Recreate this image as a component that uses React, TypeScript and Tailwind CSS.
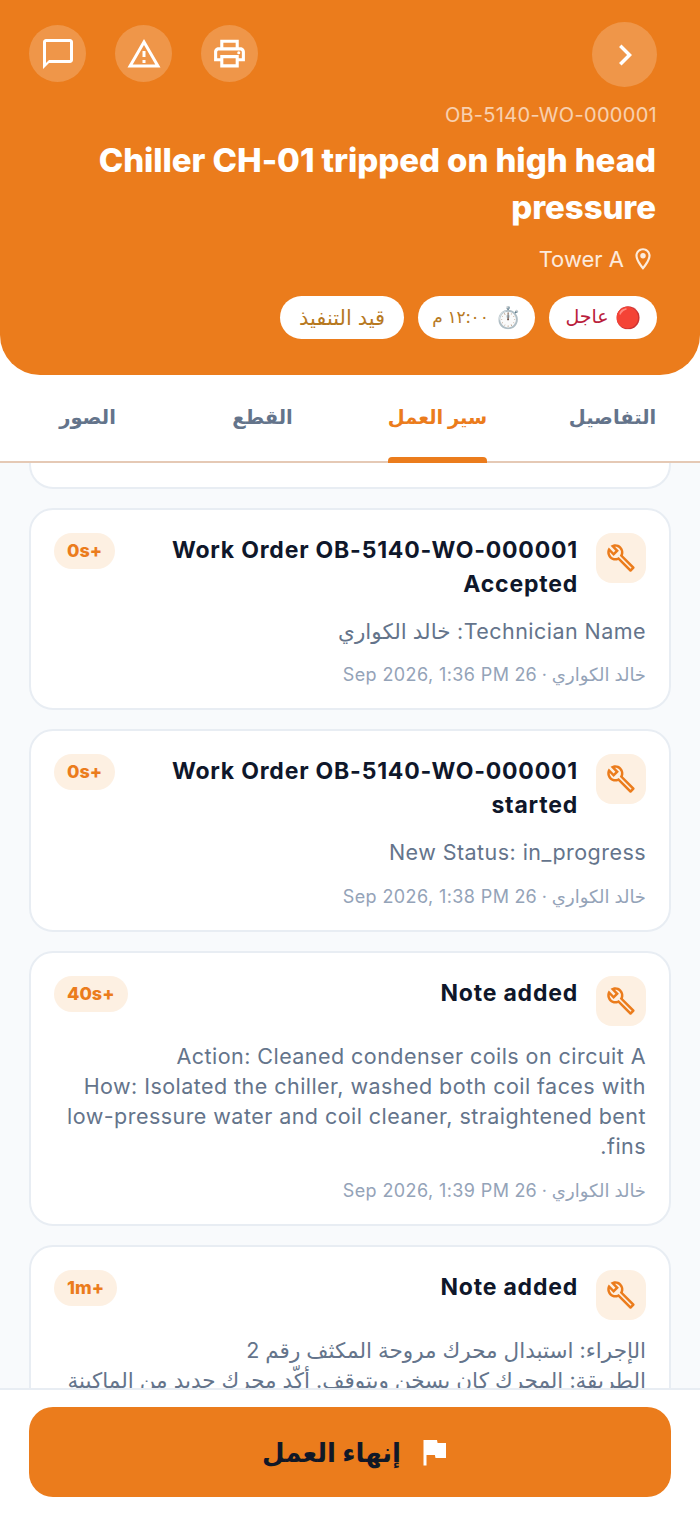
import {
  MdChevronRight,
  MdFlag,
  MdOutlineBuild,
  MdOutlineChatBubbleOutline,
  MdOutlineLocationOn,
  MdOutlinePrint,
  MdOutlineWarningAmber,
} from "react-icons/md";

type Item = { badge: string; title: string; body: string[]; time: string };

const items: Item[] = [
  {
    badge: "+0s",
    title: "Work Order OB-5140-WO-000001 Accepted",
    body: ["Technician Name: خالد الكواري"],
    time: "خالد الكواري · 26 Sep 2026, 1:36 PM",
  },
  {
    badge: "+0s",
    title: "Work Order OB-5140-WO-000001 started",
    body: ["New Status: in_progress"],
    time: "خالد الكواري · 26 Sep 2026, 1:38 PM",
  },
  {
    badge: "+40s",
    title: "Note added",
    body: [
      "Action: Cleaned condenser coils on circuit A",
      "How: Isolated the chiller, washed both coil faces with low-pressure water and coil cleaner, straightened bent fins.",
    ],
    time: "خالد الكواري · 26 Sep 2026, 1:39 PM",
  },
  {
    badge: "+1m",
    title: "Note added",
    body: [
      "الإجراء: استبدال محرك مروحة المكثف رقم 2",
      "الطريقة: المحرك كان يسخن ويتوقف. أكّد محرك جديد من الماكينة",
    ],
    time: "خالد الكواري · 26 Sep 2026, 1:40 PM",
  },
];

function Card({ item }: { item: Item }) {
  return (
    <div className="shrink-0 rounded-[24px] border-2 border-[#e8edf3] bg-white px-[23px] pt-[23px] pb-[19px]">
      <div className="flex items-start gap-[18px]">
        <div className="flex h-[50px] w-[50px] shrink-0 items-center justify-center rounded-[16px] bg-[#fdf0e2]">
          <MdOutlineBuild className="h-[30px] w-[30px] text-[#eb7c1c]" />
        </div>
        <div className="min-w-0 flex-1 pl-[10px] text-[23px] leading-[34px] font-bold tracking-[0.8px] text-[#0f172a]">
          {item.title}
        </div>
        <div className="shrink-0 rounded-full bg-[#fdf0e2] px-[13px] text-[18px] leading-[36px] font-extrabold text-[#eb7c1c]">
          {item.badge}
        </div>
      </div>
      <div className="mt-[15px] text-[21.5px] leading-[30.25px] tracking-[0.45px] text-[#64748b]">
        {item.body.map((line) => (
          <div key={line}>{line}</div>
        ))}
      </div>
      <div className="mt-[15px] text-[18px] leading-[28px] tracking-[0.4px] text-[#94a3b8]">{item.time}</div>
    </div>
  );
}

function HeaderButton({ children }: { children: React.ReactNode }) {
  return (
    <div className="flex h-[57px] w-[57px] items-center justify-center rounded-full bg-white/20 text-white">
      {children}
    </div>
  );
}

export default function App() {
  return (
    <div
      dir="rtl"
      className="flex h-[1515px] w-[700px] flex-col overflow-hidden bg-white font-['Inter','DejaVu_Sans',sans-serif]"
    >
      <header className="h-[375px] shrink-0 rounded-b-[40px] bg-[#eb7c1c] pt-[22px] pr-[44px] pl-[29px]">
        <div className="-mr-px flex items-start justify-between">
          <div className="flex h-[65px] w-[65px] items-center justify-center rounded-full bg-white/20 text-white">
            <MdChevronRight className="h-[42px] w-[42px]" />
          </div>
          <div className="mt-[3px] flex gap-[29px]">
            <HeaderButton>
              <MdOutlinePrint className="h-[37px] w-[37px]" />
            </HeaderButton>
            <HeaderButton>
              <MdOutlineWarningAmber className="h-[36px] w-[36px]" />
            </HeaderButton>
            <HeaderButton>
              <MdOutlineChatBubbleOutline className="h-[36px] w-[36px]" />
            </HeaderButton>
          </div>
        </div>
        <div className="mt-[14px] -mr-px text-[20px] leading-[28px] tracking-[0.3px] text-white/65">OB-5140-WO-000001</div>
        <h1 className="mt-[8px] text-[33px] leading-[47px] font-extrabold tracking-[-0.07px] text-white">
          Chiller CH-01 tripped on high head pressure
        </h1>
        <div className="mt-[12px] flex items-center gap-[6px] text-[22px] leading-[32px] text-white/85">
          <MdOutlineLocationOn className="h-[26px] w-[26px]" />
          <span>Tower A</span>
        </div>
        <div className="mt-[21px] -mr-px flex gap-[14px]">
          <div className="flex h-[43px] w-[108px] items-center justify-center gap-[6px] rounded-full bg-white text-[19px] text-[#b91c3c]">
            <span className="text-[21px]">🔴</span>
            <span>عاجل</span>
          </div>
          <div className="flex h-[43px] w-[117px] items-center justify-center gap-[6px] rounded-full bg-white text-[17px] text-[#b7791f]">
            <span className="text-[21px]">⏱️</span>
            <span>١٢:٠٠ م</span>
          </div>
          <div className="flex h-[43px] w-[124px] items-center justify-center rounded-full bg-white text-[21px] text-[#b7791f]">
            قيد التنفيذ
          </div>
        </div>
      </header>

      <nav className="grid h-[88px] shrink-0 grid-cols-4 border-b-2 border-[#e5c9b5] bg-white text-[19.5px] font-bold text-[#64748b]">
        <div className="flex justify-center">
          <span className="pt-[28px]">التفاصيل</span>
        </div>
        <div className="flex justify-center">
          <div className="-mb-[2px] flex flex-col justify-between pt-[28px] text-[#eb7c1c]">
            <span>سير العمل</span>
            <div className="h-[6px] rounded-t-[4px] bg-[#eb7c1c]" />
          </div>
        </div>
        <div className="flex justify-center">
          <span className="pt-[28px]">القطع</span>
        </div>
        <div className="flex justify-center">
          <span className="pt-[28px]">الصور</span>
        </div>
      </nav>

      <main className="flex min-h-0 flex-1 flex-col gap-[19px] overflow-hidden bg-[#f8fafc] px-[29px]">
        <div className="h-[26px] shrink-0 rounded-b-[24px] border-2 border-t-0 border-[#e8edf3] bg-white" />
        {items.map((item, i) => (
          <Card key={i} item={item} />
        ))}
      </main>

      <footer className="h-[127px] shrink-0 border-t-2 border-[#e8edf3] bg-white px-[29px] pt-[17px]">
        <button className="flex h-[90px] w-full items-center justify-center gap-[15px] rounded-[24px] bg-[#eb7c1c] pl-[14px] text-[26px] font-bold text-[#111827]">
          <MdFlag className="h-[36px] w-[36px] text-white" />
          <span>إنهاء العمل</span>
        </button>
      </footer>
    </div>
  );
}
